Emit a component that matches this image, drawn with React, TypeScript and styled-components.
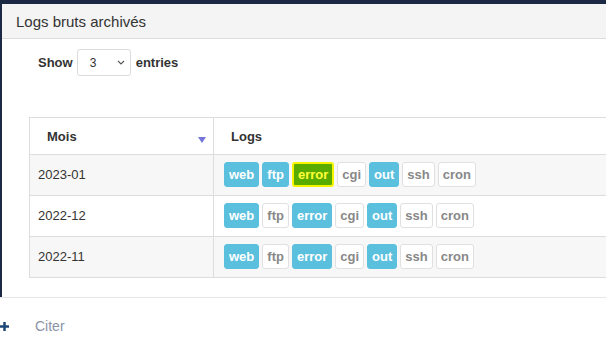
import React from 'react';
import styled, { createGlobalStyle } from 'styled-components';

type LogState = 'on' | 'off' | 'hot';

interface MonthRow {
  month: string;
  logs: [string, LogState][];
}

const rows: MonthRow[] = [
  {
    month: '2023-01',
    logs: [['web', 'on'], ['ftp', 'on'], ['error', 'hot'], ['cgi', 'off'], ['out', 'on'], ['ssh', 'off'], ['cron', 'off']],
  },
  {
    month: '2022-12',
    logs: [['web', 'on'], ['ftp', 'off'], ['error', 'on'], ['cgi', 'off'], ['out', 'on'], ['ssh', 'off'], ['cron', 'off']],
  },
  {
    month: '2022-11',
    logs: [['web', 'on'], ['ftp', 'off'], ['error', 'on'], ['cgi', 'off'], ['out', 'on'], ['ssh', 'off'], ['cron', 'off']],
  },
];

export default function App(): JSX.Element {
  return (
    <>
      <GlobalStyle />
      <Frame>
        <Panel>
          <PanelHeading>Logs bruts archivés</PanelHeading>
          <PanelBody>
            <LengthControl>
              Show
              <SelectBox>
                <span>3</span>
                <svg width="8" height="5" viewBox="0 0 8 5">
                  <path d="M1 1l3 3 3-3" fill="none" stroke="#555" strokeWidth="1.1" />
                </svg>
              </SelectBox>
              entries
            </LengthControl>
            <LogTable>
              <thead>
                <tr>
                  <HeadCell $width={184}>
                    <HeadInner>
                      <span>Mois</span>
                      <SortArrow />
                    </HeadInner>
                  </HeadCell>
                  <HeadCell>Logs</HeadCell>
                </tr>
              </thead>
              <tbody>
                {rows.map((row, i) => (
                  <BodyRow key={row.month} $striped={i % 2 === 0}>
                    <Cell>{row.month}</Cell>
                    <Cell $padLeft={10}>
                      <BadgeList>
                        {row.logs.map(([name, state]) => (
                          <Badge key={name} $state={state}>
                            {name}
                          </Badge>
                        ))}
                      </BadgeList>
                    </Cell>
                  </BodyRow>
                ))}
              </tbody>
            </LogTable>
          </PanelBody>
        </Panel>
      </Frame>
      <Footer>
        <svg width="9" height="9" viewBox="0 0 9 9">
          <path d="M0 4.5h9M4.5 0v9" stroke="#1d4877" strokeWidth="2.5" />
        </svg>
        <CiteLink>Citer</CiteLink>
      </Footer>
    </>
  );
}

const GlobalStyle = createGlobalStyle`
  body {
    margin: 0;
    background: #ffffff;
    font-family: "Liberation Sans", Arial, sans-serif;
    color: #333333;
    overflow: hidden;
  }
`;

const Frame = styled.div`
  background: #1b2944;
  padding: 4px 0 0 2px;
`;

const Panel = styled.div`
  background: #ffffff;
  height: 293px;
  overflow: hidden;
  display: flex;
  flex-direction: column;
`;

const PanelHeading = styled.div`
  height: 35px;
  line-height: 35px;
  padding: 0 14px;
  font-size: 15px;
  color: #333333;
  background: #f4f4f4;
  border-bottom: 1px solid #dddddd;
  box-sizing: border-box;
  flex-shrink: 0;
`;

const PanelBody = styled.div`
  padding: 10px 0 0 27px;
`;

const LengthControl = styled.div`
  display: flex;
  align-items: center;
  padding-left: 9px;
  font-size: 13px;
  font-weight: bold;
  color: #333333;
  height: 27px;
  margin-bottom: 41px;
`;

const SelectBox = styled.div`
  display: flex;
  align-items: center;
  justify-content: space-between;
  box-sizing: border-box;
  width: 54px;
  height: 27px;
  margin: 0 5px 0 4px;
  padding: 0 5px 0 12px;
  border: 1px solid #dcdcdc;
  border-radius: 3px;
  font-size: 12px;
  font-weight: normal;
  color: #333333;
`;

const LogTable = styled.table`
  border-collapse: collapse;
  width: 620px;
  font-size: 13px;
  border-left: 1px solid #dddddd;
  border-top: 1px solid #dddddd;
`;

const HeadCell = styled.th<{ $width?: number }>`
  width: ${(p) => (p.$width ? `${p.$width}px` : 'auto')};
  box-sizing: border-box;
  height: 37px;
  padding: 0 7px 0 17px;
  text-align: left;
  font-weight: bold;
  border-right: 1px solid #dddddd;
  border-bottom: 1px solid #dddddd;
`;

const HeadInner = styled.div`
  display: flex;
  justify-content: space-between;
  align-items: center;
`;

const SortArrow = styled.span`
  width: 0;
  height: 0;
  margin-top: 8px;
  border-left: 4px solid transparent;
  border-right: 4px solid transparent;
  border-top: 6px solid #7575dc;
`;

const BodyRow = styled.tr<{ $striped: boolean }>`
  background: ${(p) => (p.$striped ? '#f7f7f7' : '#ffffff')};
`;

const Cell = styled.td<{ $padLeft?: number }>`
  padding: 7px 8px 8px ${(p) => p.$padLeft ?? 8}px;
  height: 25px;
  border-right: 1px solid #dddddd;
  border-bottom: 1px solid #dddddd;
  color: #333333;
`;

const BadgeList = styled.div`
  display: flex;
  gap: 3px;
`;

const Badge = styled.span<{ $state: LogState }>`
  display: inline-flex;
  align-items: center;
  height: 25px;
  box-sizing: border-box;
  padding: 0 4px;
  border-radius: 3px;
  font-size: 13px;
  font-weight: bold;
  border: ${(p) =>
    p.$state === 'hot' ? '2px solid #f4f400' : p.$state === 'on' ? '1px solid #5bc0de' : '1px solid #e0e0e0'};
  background: ${(p) => (p.$state === 'hot' ? '#5aab00' : p.$state === 'on' ? '#5bc0de' : '#ffffff')};
  color: ${(p) => (p.$state === 'hot' ? '#ffff3a' : p.$state === 'on' ? '#ffffff' : '#888888')};
`;

const Footer = styled.div`
  display: flex;
  align-items: center;
  gap: 26px;
  border-top: 1px solid #e6e6e6;
  padding-top: 20px;
`;

const CiteLink = styled.span`
  font-size: 14px;
  color: #8a93a6;
`;
